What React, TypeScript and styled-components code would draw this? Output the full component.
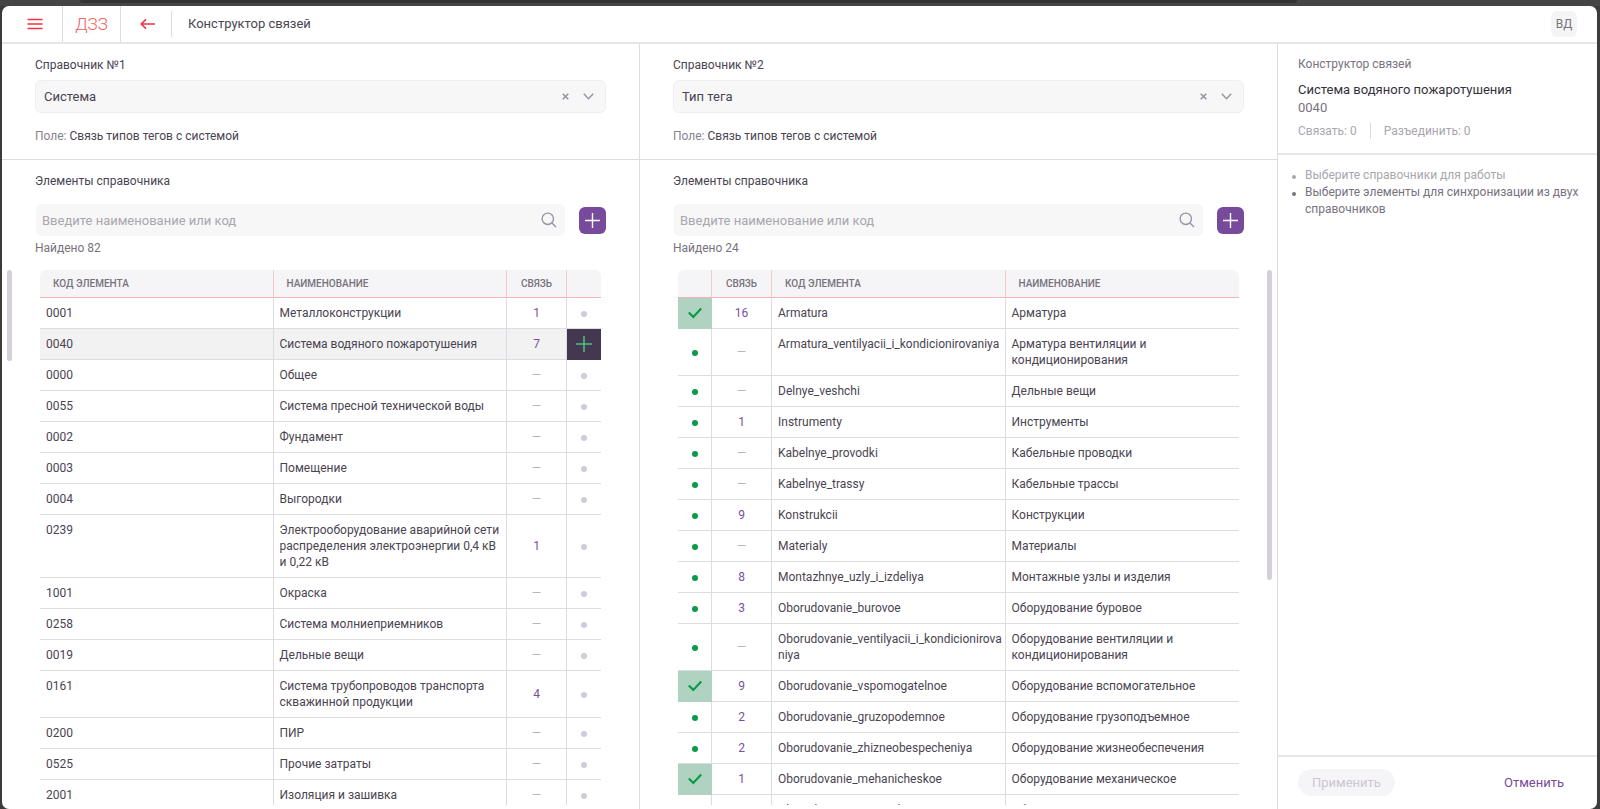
import React, { useState } from "react";
import styled, { createGlobalStyle, css } from "styled-components";

const GlobalStyle = createGlobalStyle`
  *, *::before, *::after { box-sizing: border-box; }
  body {
    margin: 0;
    background: #3b3b3b;
    color: #4a4451;
    font: 12px/16px Roboto, "Liberation Sans", sans-serif;
  }
  button, input, select { font: inherit; color: inherit; }
  button { padding: 0; border: 0; background: none; cursor: pointer; }
  h1, h2, p, ul { margin: 0; font-weight: 400; }
`;

const line = "#dedce3";

const Frame = styled.div`
  display: flex;
  flex-direction: column;
  height: 100vh;
  padding: 0 3px 0 2px;
`;

const TabStrip = styled.div`
  flex: none;
  height: 6px;
  margin: 0 -3px 0 -2px;
  padding: 0 19% 0 5%;
  background: #454545;
`;

const TabStripFill = styled.div`
  height: 3px;
  border-radius: 0 0 6px 6px;
  background: #333333;
`;

const Window = styled.div`
  flex: 1;
  min-height: 0;
  display: flex;
  flex-direction: column;
  overflow: hidden;
  border-radius: 7px;
  background: #ffffff;
`;

const TopBar = styled.header`
  flex: none;
  display: flex;
  align-items: center;
  height: 38px;
  padding-right: 20px;
  border-bottom: 2px solid #e6e5ea;
`;

const BarButton = styled.button<{ $width: number; $divided?: boolean }>`
  display: flex;
  align-items: center;
  justify-content: center;
  align-self: stretch;
  width: ${(p) => p.$width}px;
  padding-left: ${(p) => (p.$divided ? 6 : 3)}px;
  color: #ee3340;
  ${(p) => p.$divided && css`border-right: 1px solid ${line};`}
`;

const Brand = styled.a`
  display: flex;
  align-items: center;
  justify-content: center;
  align-self: stretch;
  width: 58px;
  border-right: 1px solid ${line};
  color: #f0605c;
  font-size: 17px;
  font-weight: 300;
  text-decoration: none;
`;

const PageTitle = styled.h1`
  flex: 1;
  padding-left: 16px;
  border-left: 1px solid ${line};
  font-size: 13px;
  line-height: 26px;
`;

const Avatar = styled.button`
  width: 26px;
  height: 26px;
  border-radius: 6px;
  background: #f5f5f6;
  color: #77727d;
`;

const Columns = styled.main`
  flex: 1;
  min-height: 0;
  display: grid;
  grid-template-columns: 2fr 2fr 1fr;
`;

const Panel = styled.section`
  display: flex;
  flex-direction: column;
  min-width: 0;
  min-height: 0;
  border-right: 1px solid ${line};
`;

const Source = styled.div`
  flex: none;
  height: 116px;
  padding: 12px 33px 0;
  border-bottom: 1px solid ${line};
`;

const FieldLabel = styled.label`
  display: block;
  line-height: 18px;
`;

const SelectBox = styled.div`
  display: flex;
  align-items: center;
  height: 33px;
  margin: 6px 0 15px;
  padding-right: 11px;
  border: 1px solid #efeff0;
  border-radius: 6px;
  background: #f7f7f7;
  color: #9a93a3;
`;

const Select = styled.select`
  flex: 1;
  height: 31px;
  padding: 0 8px;
  border: 0;
  appearance: none;
  background: none;
  color: #4a4451;
  font-size: 13px;
`;

const ClearButton = styled.button`
  display: flex;
  margin-right: 14px;
`;

const Muted = styled.span`
  color: #88838f;
`;

const Search = styled.div`
  flex: none;
  padding: 12px 33px 0;
`;

const SearchRow = styled.div`
  display: flex;
  align-items: center;
  gap: 14px;
  margin: 14px 0 4px;
`;

const SearchBox = styled.div`
  flex: 1;
  display: flex;
  align-items: center;
  height: 32px;
  margin-left: 1px;
  padding: 0 8px 0 0;
  border-radius: 5px;
  background: #f7f7f7;
  color: #9a93a3;
`;

const SearchInput = styled.input`
  flex: 1;
  min-width: 0;
  height: 32px;
  padding: 0 6px;
  border: 0;
  background: none;
  font-size: 13px;
  &::placeholder { color: #a9a6ad; opacity: 1; }
`;

const AddButton = styled.button`
  display: flex;
  align-items: center;
  justify-content: center;
  width: 27px;
  height: 27px;
  border-radius: 6px;
  background: #774a9b;
  color: #ffffff;
`;

const Found = styled.p`
  color: #77727d;
`;

const Scroller = styled.div<{ $thumbSide: "left" | "right" }>`
  flex: 1;
  min-height: 0;
  display: flex;
  flex-direction: ${(p) => (p.$thumbSide === "left" ? "row" : "row-reverse")};
  margin-top: 14px;
  margin-bottom: 4px;
  padding: ${(p) => (p.$thumbSide === "left" ? "0 38px 0 5px" : "0 5px 0 38px")};
`;

const Track = styled.div<{ $thumbSide: "left" | "right" }>`
  flex: none;
  width: 5px;
  ${(p) => (p.$thumbSide === "left" ? "margin-right: 28px;" : "margin-left: 28px;")}
`;

const Thumb = styled.div<{ $share: number }>`
  height: ${(p) => p.$share}%;
  border-radius: 3px;
  background: #d5cfdb;
`;

const Viewport = styled.div`
  flex: 1;
  min-width: 0;
  overflow: hidden;
`;

const Table = styled.table`
  width: 100%;
  table-layout: fixed;
  border-collapse: separate;
  border-spacing: 0;
`;

const HeadCell = styled.th<{ $center?: boolean }>`
  height: 28px;
  padding: 0 ${(p) => (p.$center ? 0 : 13)}px;
  border-right: 1px solid #f6c9ca;
  border-bottom: 1px solid #f3b3b5;
  background: #f5f5f7;
  color: #77727d;
  font-size: 10px;
  font-weight: 500;
  text-align: ${(p) => (p.$center ? "center" : "left")};
  text-transform: uppercase;
  &:first-child { border-top-left-radius: 6px; }
  &:last-child { border-top-right-radius: 6px; border-right: 0; }
`;

const Row = styled.tr<{ $active?: boolean }>`
  background: ${(p) => (p.$active ? "#f2f2f2" : "transparent")};
`;

const Cell = styled.td`
  padding: 7px 1px 7px 6px;
  border-right: 1px solid ${line};
  border-bottom: 1px solid ${line};
  vertical-align: top;
  overflow-wrap: anywhere;
  &:last-child { border-right: 0; }
`;

const LinkCell = styled(Cell)<{ $empty: boolean }>`
  padding: 7px 0;
  text-align: center;
  vertical-align: middle;
  color: ${(p) => (p.$empty ? "#b8b5bd" : "#7a4fa0")};
`;

const MarkCell = styled(Cell)<{ $fill?: string }>`
  padding: 0;
  vertical-align: middle;
  background: ${(p) => p.$fill || "transparent"};
  ${(p) => p.$fill && css`border-color: ${p.$fill};`}
`;

const Mark = styled.button`
  display: flex;
  align-items: center;
  justify-content: center;
  width: 100%;
  height: 30px;
  color: #4cc082;
`;

const Tick = styled.label`
  display: grid;
  place-items: center;
  height: 30px;
  color: #0b9a4b;
  cursor: pointer;
  & > * { grid-area: 1 / 1; }
  & > svg, & > span { pointer-events: none; }
`;

const TickInput = styled.input`
  width: 100%;
  height: 100%;
  margin: 0;
  appearance: none;
`;

const Dot = styled.span<{ $color: string }>`
  width: 6px;
  height: 6px;
  margin-top: 2px;
  border-radius: 50%;
  background: ${(p) => p.$color};
`;

const Side = styled.aside`
  display: flex;
  flex-direction: column;
  min-height: 0;
`;

const Summary = styled.div`
  flex: none;
  height: 111px;
  padding: 12px 20px 0;
  border-bottom: 2px solid #e6e5ea;
  color: #77727d;
`;

const SummaryTitle = styled.h2`
  margin-top: 9px;
  color: #35303c;
  font-size: 13px;
  line-height: 18px;
`;

const SummaryCode = styled.p`
  font-size: 13px;
  line-height: 18px;
`;

const Counters = styled.div`
  display: flex;
  margin-top: 6px;
  color: #a9a6ad;
`;

const Counter = styled.span`
  & + & {
    margin-left: 13px;
    padding-left: 13px;
    border-left: 1px solid ${line};
  }
`;

const Hints = styled.ul`
  flex: 1;
  padding: 12px 12px 0 14px;
  color: #77727d;
  list-style: none;
`;

const Hint = styled.li<{ $done?: boolean }>`
  display: flex;
  gap: 9px;
  line-height: 17px;
  ${(p) => p.$done && css`color: #a9a6ad;`}
  &::before {
    content: "";
    flex: none;
    width: 4px;
    height: 4px;
    margin-top: 8px;
    border-radius: 50%;
    background: currentColor;
  }
`;

const Footer = styled.footer`
  flex: none;
  display: flex;
  justify-content: space-between;
  align-items: flex-start;
  height: 54px;
  padding: 12px 33px 0 20px;
  border-top: 2px solid #e6e5ea;
  font-size: 13px;
`;

const Apply = styled.button`
  height: 27px;
  padding: 0 14px;
  border-radius: 14px;
  background: #f5f5f7;
  &:disabled { color: #cdc6d3; }
`;

const Cancel = styled.button`
  height: 27px;
  color: #774a9b;
`;

const stroke = { fill: "none", stroke: "currentColor" };

const MenuIcon = () => (
  <svg width="16" height="12" viewBox="0 0 16 12" {...stroke} strokeWidth="1.6"><path d="M.5 1.5h15M.5 6h15M.5 10.5h15" /></svg>
);
const BackIcon = () => (
  <svg width="16" height="12" viewBox="0 0 16 12" {...stroke} strokeWidth="1.6"><path d="M15 6H1.5M6 1.2 1.300 6 6 10.8" /></svg>
);
const CrossIcon = () => (
  <svg width="7" height="7" viewBox="0 0 7 7" {...stroke} strokeWidth="1.6"><path d="m.7.7 5.600 5.600M6.300.7.7 6.300" /></svg>
);
const ChevronIcon = () => (
  <svg width="11" height="7" viewBox="0 0 11 7" {...stroke} strokeWidth="1.5"><path d="m.8.8 4.700 4.900L10.200.8" /></svg>
);
const SearchIcon = () => (
  <svg width="16" height="16" viewBox="0 0 16 16" {...stroke} strokeWidth="1.4"><circle cx="6.800" cy="6.800" r="5.700" /><path d="m11 11 4 4" /></svg>
);
const PlusIcon = ({ size = 15 }: { size?: number }) => (
  <svg width={size} height={size} viewBox="0 0 15 15" {...stroke} strokeWidth="1.4"><path d="M7.500 0v15M0 7.500h15" /></svg>
);
const CheckIcon = () => (
  <svg width="14" height="12" viewBox="0 0 14 12" {...stroke} strokeWidth="2.2"><path d="m.8 5.500 4.500 4.400L13.200 1.500" /></svg>
);

type Item = { code: string; name: string; links: number; checked?: boolean };

const systems: Item[] = [
  { code: "0001", name: "Металлоконструкции", links: 1 },
  { code: "0040", name: "Система водяного пожаротушения", links: 7 },
  { code: "0000", name: "Общее", links: 0 },
  { code: "0055", name: "Система пресной технической воды", links: 0 },
  { code: "0002", name: "Фундамент", links: 0 },
  { code: "0003", name: "Помещение", links: 0 },
  { code: "0004", name: "Выгородки", links: 0 },
  { code: "0239", name: "Электрооборудование аварийной сети распределения электроэнергии 0,4 кВ и 0,22 кВ", links: 1 },
  { code: "1001", name: "Окраска", links: 0 },
  { code: "0258", name: "Система молниеприемников", links: 0 },
  { code: "0019", name: "Дельные вещи", links: 0 },
  { code: "0161", name: "Система трубопроводов транспорта скважинной продукции", links: 4 },
  { code: "0200", name: "ПИР", links: 0 },
  { code: "0525", name: "Прочие затраты", links: 0 },
  { code: "2001", name: "Изоляция и зашивка", links: 0 },
];

const tagTypes: Item[] = [
  { code: "Armatura", name: "Арматура", links: 16, checked: true },
  { code: "Armatura_ventilyacii_i_kondicionirovaniya", name: "Арматура вентиляции и кондиционирования", links: 0 },
  { code: "Delnye_veshchi", name: "Дельные вещи", links: 0 },
  { code: "Instrumenty", name: "Инструменты", links: 1 },
  { code: "Kabelnye_provodki", name: "Кабельные проводки", links: 0 },
  { code: "Kabelnye_trassy", name: "Кабельные трассы", links: 0 },
  { code: "Konstrukcii", name: "Конструкции", links: 9 },
  { code: "Materialy", name: "Материалы", links: 0 },
  { code: "Montazhnye_uzly_i_izdeliya", name: "Монтажные узлы и изделия", links: 8 },
  { code: "Oborudovanie_burovoe", name: "Оборудование буровое", links: 3 },
  { code: "Oborudovanie_ventilyacii_i_kondicionirovaniya", name: "Оборудование вентиляции и кондиционирования", links: 0 },
  { code: "Oborudovanie_vspomogatelnoe", name: "Оборудование вспомогательное", links: 9, checked: true },
  { code: "Oborudovanie_gruzopodemnoe", name: "Оборудование грузоподъемное", links: 2 },
  { code: "Oborudovanie_zhizneobespecheniya", name: "Оборудование жизнеобеспечения", links: 2 },
  { code: "Oborudovanie_mehanicheskoe", name: "Оборудование механическое", links: 1, checked: true },
  { code: "Oborudovanie_promyslovoe", name: "Оборудование промысловое", links: 0 },
];

type PanelProps = {
  index: number;
  source: string;
  found: number;
  thumbSide: "left" | "right";
  thumbShare: number;
  children: React.ReactNode;
};

function DirectoryPanel({ index, source, found, thumbSide, thumbShare, children }: PanelProps) {
  return (
    <Panel>
      <Source>
        <FieldLabel htmlFor={`source-${index}`}>Справочник №{index}</FieldLabel>
        <SelectBox>
          <Select id={`source-${index}`} defaultValue={source}>
            <option>{source}</option>
          </Select>
          <ClearButton aria-label="Очистить"><CrossIcon /></ClearButton>
          <ChevronIcon />
        </SelectBox>
        <p><Muted>Поле:</Muted> Связь типов тегов с системой</p>
      </Source>
      <Search>
        <FieldLabel htmlFor={`search-${index}`}>Элементы справочника</FieldLabel>
        <SearchRow>
          <SearchBox>
            <SearchInput id={`search-${index}`} placeholder="Введите наименование или код" />
            <SearchIcon />
          </SearchBox>
          <AddButton aria-label="Добавить"><PlusIcon /></AddButton>
        </SearchRow>
        <Found>Найдено {found}</Found>
      </Search>
      <Scroller $thumbSide={thumbSide}>
        <Track $thumbSide={thumbSide}><Thumb $share={thumbShare} /></Track>
        <Viewport>{children}</Viewport>
      </Scroller>
    </Panel>
  );
}

const Links = ({ count }: { count: number }) => <LinkCell $empty={!count}>{count || "—"}</LinkCell>;

export default function App() {
  const [active, setActive] = useState("0040");
  const [checked, setChecked] = useState(() => new Set(tagTypes.filter((t) => t.checked).map((t) => t.code)));
  const toggle = (code: string) => {
    const next = new Set(checked);
    if (!next.delete(code)) next.add(code);
    setChecked(next);
  };
  const current = systems.find((s) => s.code === active)!;

  return (
    <Frame>
      <GlobalStyle />
      <TabStrip><TabStripFill /></TabStrip>
      <Window>
        <TopBar>
          <BarButton $width={61} $divided aria-label="Меню"><MenuIcon /></BarButton>
          <Brand href="#">ДЗЗ</Brand>
          <BarButton $width={50} aria-label="Назад"><BackIcon /></BarButton>
          <PageTitle>Конструктор связей</PageTitle>
          <Avatar>ВД</Avatar>
        </TopBar>
        <Columns>
          <DirectoryPanel index={1} source="Система" found={82} thumbSide="left" thumbShare={17}>
            <Table>
              <colgroup><col /><col /><col width="60" /><col width="34" /></colgroup>
              <thead>
                <tr>
                  <HeadCell>Код элемента</HeadCell>
                  <HeadCell>Наименование</HeadCell>
                  <HeadCell $center>Связь</HeadCell>
                  <HeadCell aria-label="Выбор" />
                </tr>
              </thead>
              <tbody>
                {systems.map((s) => (
                  <Row key={s.code} $active={s.code === active}>
                    <Cell>{s.code}</Cell>
                    <Cell>{s.name}</Cell>
                    <Links count={s.links} />
                    <MarkCell $fill={s.code === active ? "#43384f" : undefined}>
                      <Mark aria-label={`Выбрать ${s.code}`} onClick={() => setActive(s.code)}>
                        {s.code === active ? <PlusIcon size={16} /> : <Dot $color="#d0ccd8" />}
                      </Mark>
                    </MarkCell>
                  </Row>
                ))}
              </tbody>
            </Table>
          </DirectoryPanel>
          <DirectoryPanel index={2} source="Тип тега" found={24} thumbSide="right" thumbShare={58}>
            <Table>
              <colgroup><col width="34" /><col width="60" /><col /><col /></colgroup>
              <thead>
                <tr>
                  <HeadCell aria-label="Выбор" />
                  <HeadCell $center>Связь</HeadCell>
                  <HeadCell>Код элемента</HeadCell>
                  <HeadCell>Наименование</HeadCell>
                </tr>
              </thead>
              <tbody>
                {tagTypes.map((t) => {
                  const on = checked.has(t.code);
                  return (
                    <Row key={t.code}>
                      <MarkCell $fill={on ? "#afd3c0" : undefined}>
                        <Tick>
                          <TickInput type="checkbox" aria-label={t.name} checked={on} onChange={() => toggle(t.code)} />
                          {on ? <CheckIcon /> : <Dot $color="#0b9a4b" />}
                        </Tick>
                      </MarkCell>
                      <Links count={t.links} />
                      <Cell>{t.code}</Cell>
                      <Cell>{t.name}</Cell>
                    </Row>
                  );
                })}
              </tbody>
            </Table>
          </DirectoryPanel>
          <Side>
            <Summary>
              <p>Конструктор связей</p>
              <SummaryTitle>{current.name}</SummaryTitle>
              <SummaryCode>{current.code}</SummaryCode>
              <Counters>
                <Counter>Связать: 0</Counter>
                <Counter>Разъединить: 0</Counter>
              </Counters>
            </Summary>
            <Hints>
              <Hint $done>Выберите справочники для работы</Hint>
              <Hint>Выберите элементы для синхронизации из двух справочников</Hint>
            </Hints>
            <Footer>
              <Apply disabled>Применить</Apply>
              <Cancel>Отменить</Cancel>
            </Footer>
          </Side>
        </Columns>
      </Window>
    </Frame>
  );
}
